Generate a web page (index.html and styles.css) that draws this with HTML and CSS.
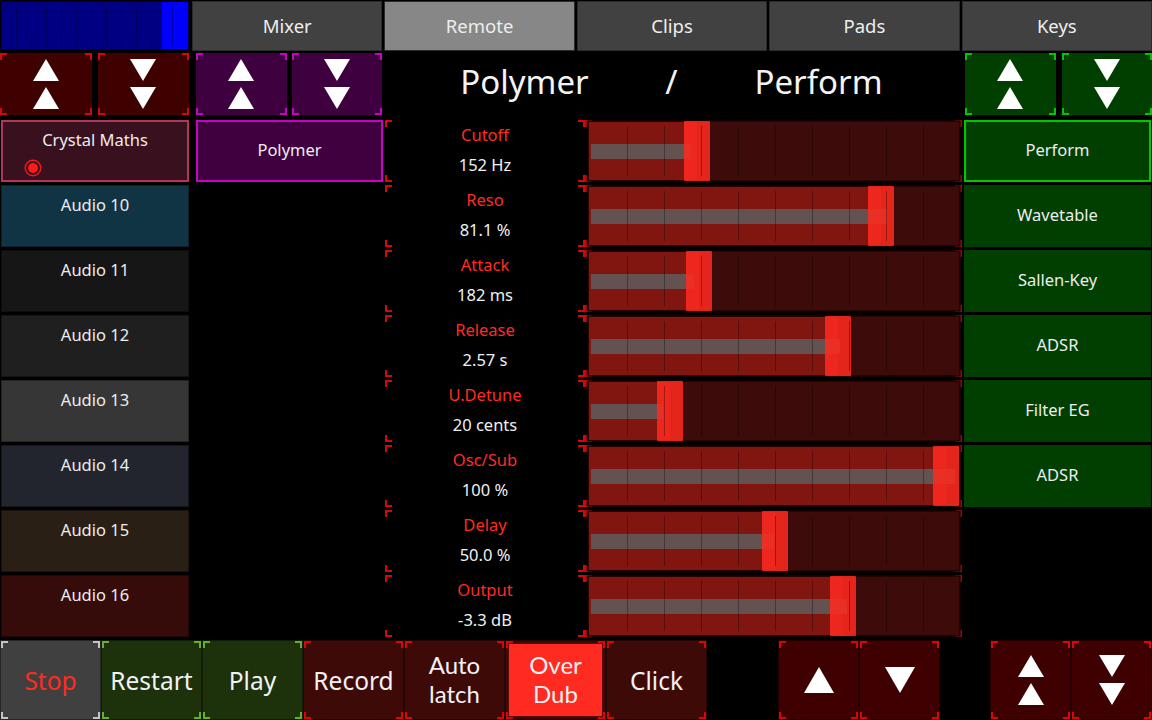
FILE: index.html
```html
<!DOCTYPE html>
<html>
<head>
<meta charset="utf-8">
<link rel="stylesheet" href="styles.css">
</head>
<body>
<div class="screen">
  <div class="tabs">
    <div class="meter"><div class="meter-body"><div class="meter-peak"></div></div></div>
    <div class="tab">Mixer</div>
    <div class="tab active">Remote</div>
    <div class="tab">Clips</div>
    <div class="tab">Pads</div>
    <div class="tab">Keys</div>
  </div>

  <div class="main">
    <div class="col col-a">
      <div class="pair">
        <div class="arrow corners c-red bg-red"><svg width="26" height="50" viewBox="0 0 26 50"><polygon points="13,0 26,22 0,22"/><polygon points="13,28 26,50 0,50"/></svg></div>
        <div class="arrow corners c-red bg-red"><svg width="26" height="50" viewBox="0 0 26 50"><polygon points="0,0 26,0 13,22"/><polygon points="0,28 26,28 13,50"/></svg></div>
      </div>
      <div class="trk crystal">Crystal Maths<span class="rec"></span></div>
      <div class="trk t10">Audio 10</div>
      <div class="trk t11">Audio 11</div>
      <div class="trk t12">Audio 12</div>
      <div class="trk t13">Audio 13</div>
      <div class="trk t14">Audio 14</div>
      <div class="trk t15">Audio 15</div>
      <div class="trk t16">Audio 16</div>
    </div>

    <div class="col col-b">
      <div class="pair gap5">
        <div class="arrow corners c-mag bg-purple"><svg width="26" height="50" viewBox="0 0 26 50"><polygon points="13,0 26,22 0,22"/><polygon points="13,28 26,50 0,50"/></svg></div>
        <div class="arrow corners c-mag bg-purple"><svg width="26" height="50" viewBox="0 0 26 50"><polygon points="0,0 26,0 13,22"/><polygon points="0,28 26,28 13,50"/></svg></div>
      </div>
      <div class="device">Polymer</div>
    </div>

    <div class="col col-mid">
      <div class="title"><span>Polymer</span><span>/</span><span>Perform</span></div>

      <div class="param">
        <div class="label corners c-red"><div class="pname">Cutoff</div><div class="pval">152 Hz</div></div>
        <div class="slider corners c-red"><div class="bar" style="--v:0.275"><div class="fill"></div><div class="mod"></div><div class="handle"></div></div></div>
      </div>
      <div class="param">
        <div class="label corners c-red"><div class="pname">Reso</div><div class="pval">81.1 %</div></div>
        <div class="slider corners c-red"><div class="bar" style="--v:0.812"><div class="fill"></div><div class="mod"></div><div class="handle"></div></div></div>
      </div>
      <div class="param">
        <div class="label corners c-red"><div class="pname">Attack</div><div class="pval">182 ms</div></div>
        <div class="slider corners c-red"><div class="bar" style="--v:0.283"><div class="fill"></div><div class="mod"></div><div class="handle"></div></div></div>
      </div>
      <div class="param">
        <div class="label corners c-red"><div class="pname">Release</div><div class="pval">2.57 s</div></div>
        <div class="slider corners c-red"><div class="bar" style="--v:0.685"><div class="fill"></div><div class="mod"></div><div class="handle"></div></div></div>
      </div>
      <div class="param">
        <div class="label corners c-red"><div class="pname">U.Detune</div><div class="pval">20 cents</div></div>
        <div class="slider corners c-red"><div class="bar" style="--v:0.197"><div class="fill"></div><div class="mod"></div><div class="handle"></div></div></div>
      </div>
      <div class="param">
        <div class="label corners c-red"><div class="pname">Osc/Sub</div><div class="pval">100 %</div></div>
        <div class="slider corners c-red"><div class="bar" style="--v:1"><div class="fill"></div><div class="mod"></div><div class="handle"></div></div></div>
      </div>
      <div class="param">
        <div class="label corners c-red"><div class="pname">Delay</div><div class="pval">50.0 %</div></div>
        <div class="slider corners c-red"><div class="bar" style="--v:0.503"><div class="fill"></div><div class="mod"></div><div class="handle"></div></div></div>
      </div>
      <div class="param">
        <div class="label corners c-red"><div class="pname">Output</div><div class="pval">-3.3 dB</div></div>
        <div class="slider corners c-red"><div class="bar" style="--v:0.702"><div class="fill"></div><div class="mod"></div><div class="handle"></div></div></div>
      </div>
    </div>

    <div class="col col-r">
      <div class="pair pair-r">
        <div class="arrow corners c-green bg-green"><svg width="26" height="50" viewBox="0 0 26 50"><polygon points="13,0 26,22 0,22"/><polygon points="13,28 26,50 0,50"/></svg></div>
        <div class="arrow corners c-green bg-green"><svg width="26" height="50" viewBox="0 0 26 50"><polygon points="0,0 26,0 13,22"/><polygon points="0,28 26,28 13,50"/></svg></div>
      </div>
      <div class="page selected">Perform</div>
      <div class="page">Wavetable</div>
      <div class="page">Sallen-Key</div>
      <div class="page">ADSR</div>
      <div class="page">Filter EG</div>
      <div class="page">ADSR</div>
    </div>
  </div>

  <div class="transport">
    <div class="tbtn corners c-grey stop">Stop</div>
    <div class="tbtn corners c-lime go">Restart</div>
    <div class="tbtn corners c-lime go">Play</div>
    <div class="tbtn corners c-red rec-btn">Record</div>
    <div class="tbtn corners c-red rec-btn"><div class="two"><span>Auto</span><span>latch</span></div></div>
    <div class="tbtn corners c-red rec-btn lit-wrap"><div class="lit"><div class="two"><span>Over</span><span>Dub</span></div></div></div>
    <div class="tbtn corners c-red rec-btn">Click</div>
    <div class="tspace1"></div>
    <div class="nbtn corners c-red"><svg width="30" height="26" viewBox="0 0 30 26"><polygon points="15,0 30,26 0,26"/></svg></div>
    <div class="nbtn corners c-red"><svg width="30" height="26" viewBox="0 0 30 26"><polygon points="0,0 30,0 15,26"/></svg></div>
    <div class="tspace2"></div>
    <div class="nbtn corners c-red"><svg width="26" height="50" viewBox="0 0 26 50"><polygon points="13,0 26,22 0,22"/><polygon points="13,28 26,50 0,50"/></svg></div>
    <div class="nbtn corners c-red"><svg width="26" height="50" viewBox="0 0 26 50"><polygon points="0,0 26,0 13,22"/><polygon points="0,28 26,28 13,50"/></svg></div>
  </div>
</div>
</body>
</html>
```

FILE: styles.css
```css
html, body {
  margin: 0;
  padding: 0;
  background: #000;
}

.screen {
  width: 1152px;
  height: 720px;
  overflow: hidden;
  display: flex;
  flex-direction: column;
  background: #000;
  color: #ededed;
  font-family: "Noto Sans", "DejaVu Sans", sans-serif;
}

/* ---------- tabs ---------- */
.tabs {
  height: 50px;
  margin-top: 1px;
  display: flex;
  gap: 2px;
}

.meter {
  width: 190px;
  display: flex;
  padding: 0 1px 1px 1px;
  box-sizing: border-box;
}

.meter-body {
  flex: 1;
  display: flex;
  justify-content: flex-end;
  background-color: #000082;
  background-image: repeating-linear-gradient(90deg, transparent 0 14px, #00005e 14px 15px);
  background-size: 100% 40px;
  background-position: 0 4px;
  background-repeat: no-repeat;
  border: 1px solid #00003a;
}

.meter-peak {
  width: 26px;
  background-color: #0000ff;
  background-image: linear-gradient(90deg, transparent 0 10px, #0000a8 10px 11px, transparent 11px);
  background-size: 100% 40px;
  background-position: 0 4px;
  background-repeat: no-repeat;
}

.tab {
  flex: 1;
  display: flex;
  align-items: center;
  justify-content: center;
  padding-bottom: 1px;
  background: #414141;
  box-shadow: inset 0 0 0 1px #2b2b2b;
  font-size: 18.5px;
  color: #eeeeee;
}

.tab.active {
  background: #878787;
}

/* ---------- corner marks ---------- */
.corners {
  --cc: #d00000;
  background-image:
    linear-gradient(var(--cc), var(--cc)), linear-gradient(var(--cc), var(--cc)),
    linear-gradient(var(--cc), var(--cc)), linear-gradient(var(--cc), var(--cc)),
    linear-gradient(var(--cc), var(--cc)), linear-gradient(var(--cc), var(--cc)),
    linear-gradient(var(--cc), var(--cc)), linear-gradient(var(--cc), var(--cc));
  background-size: 7px 2px, 2px 7px, 7px 2px, 2px 7px, 7px 2px, 2px 7px, 7px 2px, 2px 7px;
  background-position: left top, left top, right top, right top, left bottom, left bottom, right bottom, right bottom;
  background-repeat: no-repeat;
}

.c-red { --cc: #d40808; }
.c-mag { --cc: #c800c8; }
.c-green { --cc: #00c800; }
.c-grey { --cc: #c4c4c4; }
.c-lime { --cc: #62b02c; }

/* ---------- main ---------- */
.main {
  display: flex;
  margin-top: 2px;
  height: 584px;
}

.col {
  display: flex;
  flex-direction: column;
  gap: 3px;
}

.col-a { width: 190px; }
.col-b { width: 187px; margin-left: 6px; }
.col-mid { width: 577px; margin-left: 2px; }
.col-r { width: 188px; margin-left: 2px; }

.pair {
  height: 62px;
  margin-bottom: 2px;
  display: flex;
  gap: 6px;
  width: 189px;
}

.pair.gap5 { gap: 5px; width: 186px; }
.pair.pair-r { margin-left: 1px; width: 187px; }

.arrow {
  flex: 1;
  display: flex;
  align-items: center;
  justify-content: center;
}

.arrow svg, .nbtn svg { fill: #ffffff; }

.bg-red { background-color: #3f0000; }
.bg-purple { background-color: #3f003f; }
.bg-green { background-color: #003f00; }

/* track buttons */
.trk {
  position: relative;
  height: 62px;
  margin-left: 1px;
  width: 188px;
  box-sizing: border-box;
  padding-top: 7px;
  line-height: 24px;
  text-align: center;
  font-size: 16.5px;
  border: 1px solid rgba(0, 0, 0, 0.35);
}

.crystal {
  background: #39101d;
  border: 2px solid #b5345a;
  padding-top: 6px;
}

.rec {
  position: absolute;
  left: 25px;
  top: 41px;
  width: 10px;
  height: 10px;
  border-radius: 50%;
  background: #ff1a1a;
  box-shadow: 0 0 0 2px #39101d, 0 0 0 3.5px #f01818;
}

.t10 { background: #113445; }
.t11 { background: #161616; }
.t12 { background: #1f1f1f; }
.t13 { background: #363636; }
.t14 { background: #22242e; }
.t15 { background: #2a1f15; }
.t16 { background: #350c0a; }

.device {
  height: 62px;
  box-sizing: border-box;
  background: #400040;
  border: 2px solid #c800c8;
  display: flex;
  align-items: center;
  justify-content: center;
  padding-bottom: 3px;
  font-size: 16.5px;
}

/* title */
.title {
  height: 62px;
  margin-bottom: 2px;
  display: grid;
  grid-template-columns: repeat(3, 147px);
  padding-left: 66px;
  align-items: center;
  justify-items: center;
  font-size: 33px;
  color: #f4f4f4;
  padding-bottom: 6px;
  box-sizing: border-box;
}

/* params */
.param {
  height: 62px;
  display: flex;
}

.label {
  width: 200px;
  text-align: center;
  font-size: 16.5px;
  line-height: 30px;
}

.pname { color: #ff2b22; }
.pval { color: #f0f0f0; }

.slider {
  width: 377px;
  box-sizing: border-box;
  padding: 1px 2px 1px 3px;
  display: flex;
}

.bar {
  position: relative;
  flex: 1;
  background: #3d0b09;
  border: 1px solid #250504;
  box-shadow: 0 0 2px 1px #1a0302;
}

.fill {
  position: absolute;
  left: 0;
  top: 0;
  bottom: 0;
  width: calc(var(--v) * (100% - 26px) + 13px);
  background: #81150f;
}

.mod {
  position: absolute;
  left: 2px;
  top: 22px;
  height: 15px;
  width: calc(var(--v) * (100% - 6px));
  background: rgba(98, 88, 86, 0.92);
}

.handle {
  position: absolute;
  top: -1px;
  bottom: -1px;
  left: calc(var(--v) * (100% - 26px));
  width: 26px;
  background: rgba(255, 42, 32, 0.86);
  border-radius: 1px;
}

.bar::after {
  content: "";
  position: absolute;
  left: 2px;
  right: 2px;
  top: 4px;
  bottom: 4px;
  background: repeating-linear-gradient(90deg, transparent 0 36px, rgba(0, 0, 0, 0.32) 36px 37px);
}

/* right pages */
.page {
  height: 62px;
  width: 187px;
  box-sizing: border-box;
  background: #003f00;
  display: flex;
  align-items: center;
  justify-content: center;
  padding-bottom: 3px;
  font-size: 16.5px;
}

.page.selected {
  border: 2px solid #00c800;
}

/* ---------- transport ---------- */
.transport {
  margin-top: 3px;
  height: 80px;
  display: flex;
}

.tbtn {
  width: 101px;
  display: flex;
  align-items: center;
  justify-content: center;
  text-align: center;
  font-size: 24.5px;
  color: #f2f2f2;
  box-sizing: border-box;
  border: 1px solid rgba(0, 0, 0, 0.4);
}

.two {
  display: flex;
  flex-direction: column;
  align-items: center;
  padding-bottom: 2px;
  font-family: Lato, "Noto Sans", sans-serif;
  font-size: 24px;
}

.two span {
  display: block;
  height: 29px;
  line-height: 29px;
}

.stop { background-color: #404040; color: #ff2b22; }
.go { background-color: #1d310b; }
.rec-btn { background-color: #3e0a08; }

.lit-wrap {
  padding: 2px;
}

.lit {
  width: 100%;
  height: 100%;
  box-sizing: border-box;
  display: flex;
  align-items: center;
  justify-content: center;
  background: #ff2a20;
  border: 1px solid #5a0a08;
}

.tspace1 { width: 71px; }
.tspace2 { width: 50px; }

.nbtn {
  width: 81px;
  display: flex;
  align-items: center;
  justify-content: center;
  background-color: #3e0000;
  box-sizing: border-box;
  border: 1px solid rgba(0, 0, 0, 0.4);
}
```
